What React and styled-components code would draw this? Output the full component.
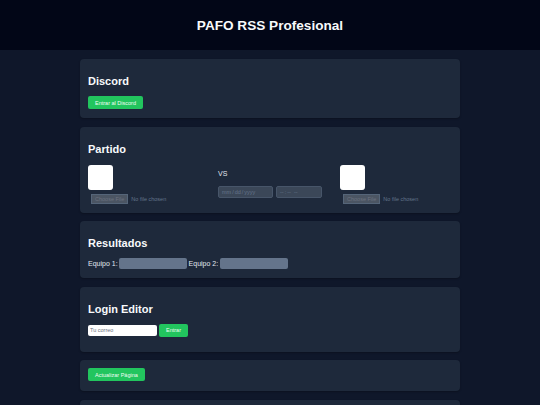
import React from "react";
import styled, { createGlobalStyle } from "styled-components";

const GlobalStyle = createGlobalStyle`
html, body {
    margin: 0;
    padding: 0;
    background: #0f172a;
    font-family: "Liberation Sans", Arial, sans-serif;
    color: #e2e8f0;
}
`;

const App = () => {
    return (
        <>
            <GlobalStyle />
            <Header>
                <Title>PAFO RSS Profesional</Title>
            </Header>
            <Main>
                <Card>
                    <CardTitle>Discord</CardTitle>
                    <GreenButton>Entrar al Discord</GreenButton>
                </Card>
                <Card>
                    <CardTitle>Partido</CardTitle>
                    <MatchRow>
                        <TeamColumn>
                            <Logo />
                            <FileInput type="file" disabled />
                        </TeamColumn>
                        <MiddleColumn>
                            <Vs>VS</Vs>
                            <DateRow>
                                <DateInput type="date" disabled width={55} />
                                <DateInput type="time" disabled width={46} />
                            </DateRow>
                        </MiddleColumn>
                        <TeamColumn>
                            <Logo />
                            <FileInput type="file" disabled />
                        </TeamColumn>
                    </MatchRow>
                </Card>
                <Card>
                    <CardTitle>Resultados</CardTitle>
                    <ScoreRow>
                        <Label>Equipo 1:</Label>
                        <ScoreInput disabled />
                        <Label>Equipo 2:</Label>
                        <ScoreInput disabled />
                    </ScoreRow>
                </Card>
                <Card bottom={15}>
                    <CardTitle>Login Editor</CardTitle>
                    <LoginRow>
                        <MailInput placeholder="Tu correo" />
                        <GreenButton>Entrar</GreenButton>
                    </LoginRow>
                </Card>
                <Card>
                    <GreenButton>Actualizar Página</GreenButton>
                </Card>
                <Card />
            </Main>
        </>
    );
};

export default App;

const Header = styled.header`
height: 50px;
background: #020617;
display: flex;
align-items: center;
justify-content: center;
`;

const Title = styled.h1`
margin: 0;
font-size: 13.6px;
font-weight: bold;
color: #f8fafc;
`;

const Main = styled.main`
width: 380px;
margin: 0 auto;
padding-top: 9px;
display: flex;
flex-direction: column;
gap: 8.5px;
`;

const Card = styled.section`
display: flex;
flex-direction: column;
align-items: stretch;
background: #1e293b;
border-radius: 4px;
padding: 8px 8px ${({ bottom }) => bottom || 9}px;
min-height: 14px;
box-shadow: 0 1px 2px rgba(0, 0, 0, 0.25);
& > button {
    align-self: flex-start;
}
`;

const CardTitle = styled.h2`
margin: 8px 0 8px;
font-size: 11px;
line-height: 13px;
font-weight: bold;
color: #f8fafc;
`;

const GreenButton = styled.button`
background: #22c55e;
color: #f0fdf4;
border: none;
border-radius: 2px;
font-family: "Liberation Sans", Arial, sans-serif;
font-size: 5.5px;
height: 13px;
padding: 0 7px;
cursor: pointer;
`;

const MatchRow = styled.div`
display: grid;
grid-template-columns: 130px 122px 1fr;
align-items: center;
padding-top: 1px;
`;

const TeamColumn = styled.div`
display: flex;
flex-direction: column;
align-items: flex-start;
gap: 4px;
`;

const Logo = styled.div`
width: 25px;
height: 25px;
background: #ffffff;
border-radius: 3px;
`;

const FileInput = styled.input`
font-family: "Liberation Sans", Arial, sans-serif;
font-size: 5.5px;
color: #64748b;
height: 10px;
width: 90px;
margin-left: 3px;
&::file-selector-button {
    font-family: inherit;
    font-size: 5.5px;
    background: #4b5563;
    color: #6b7280;
    border: 1px solid #556579;
    padding: 1px 3px;
    margin-right: 3px;
    height: 10px;
}
`;

const MiddleColumn = styled.div`
display: flex;
flex-direction: column;
gap: 9px;
`;

const Vs = styled.span`
font-size: 7px;
color: #e2e8f0;
`;

const DateRow = styled.div`
display: flex;
gap: 3px;
`;

const DateInput = styled.input`
width: ${({ width }) => width}px;
height: 12px;
box-sizing: border-box;
background: #3b4758;
border: 1px solid #475569;
border-radius: 2px;
color: #64748b;
font-family: "Liberation Sans", Arial, sans-serif;
font-size: 5.5px;
padding: 0 2px;
&::-webkit-calendar-picker-indicator {
    display: none;
}
`;

const ScoreRow = styled.div`
display: flex;
align-items: center;
gap: 1.5px;
`;

const Label = styled.span`
font-size: 7px;
color: #e2e8f0;
`;

const ScoreInput = styled.input`
width: 68px;
height: 11px;
box-sizing: border-box;
background: #64748b;
border: none;
border-radius: 2px;
`;

const LoginRow = styled.div`
display: flex;
align-items: center;
gap: 2px;
`;

const MailInput = styled.input`
width: 69px;
height: 11px;
box-sizing: border-box;
background: #ffffff;
border: none;
border-radius: 2px;
font-family: "Liberation Sans", Arial, sans-serif;
font-size: 5.5px;
padding: 0 2px;
&::placeholder {
    color: #6b7280;
}
`;
